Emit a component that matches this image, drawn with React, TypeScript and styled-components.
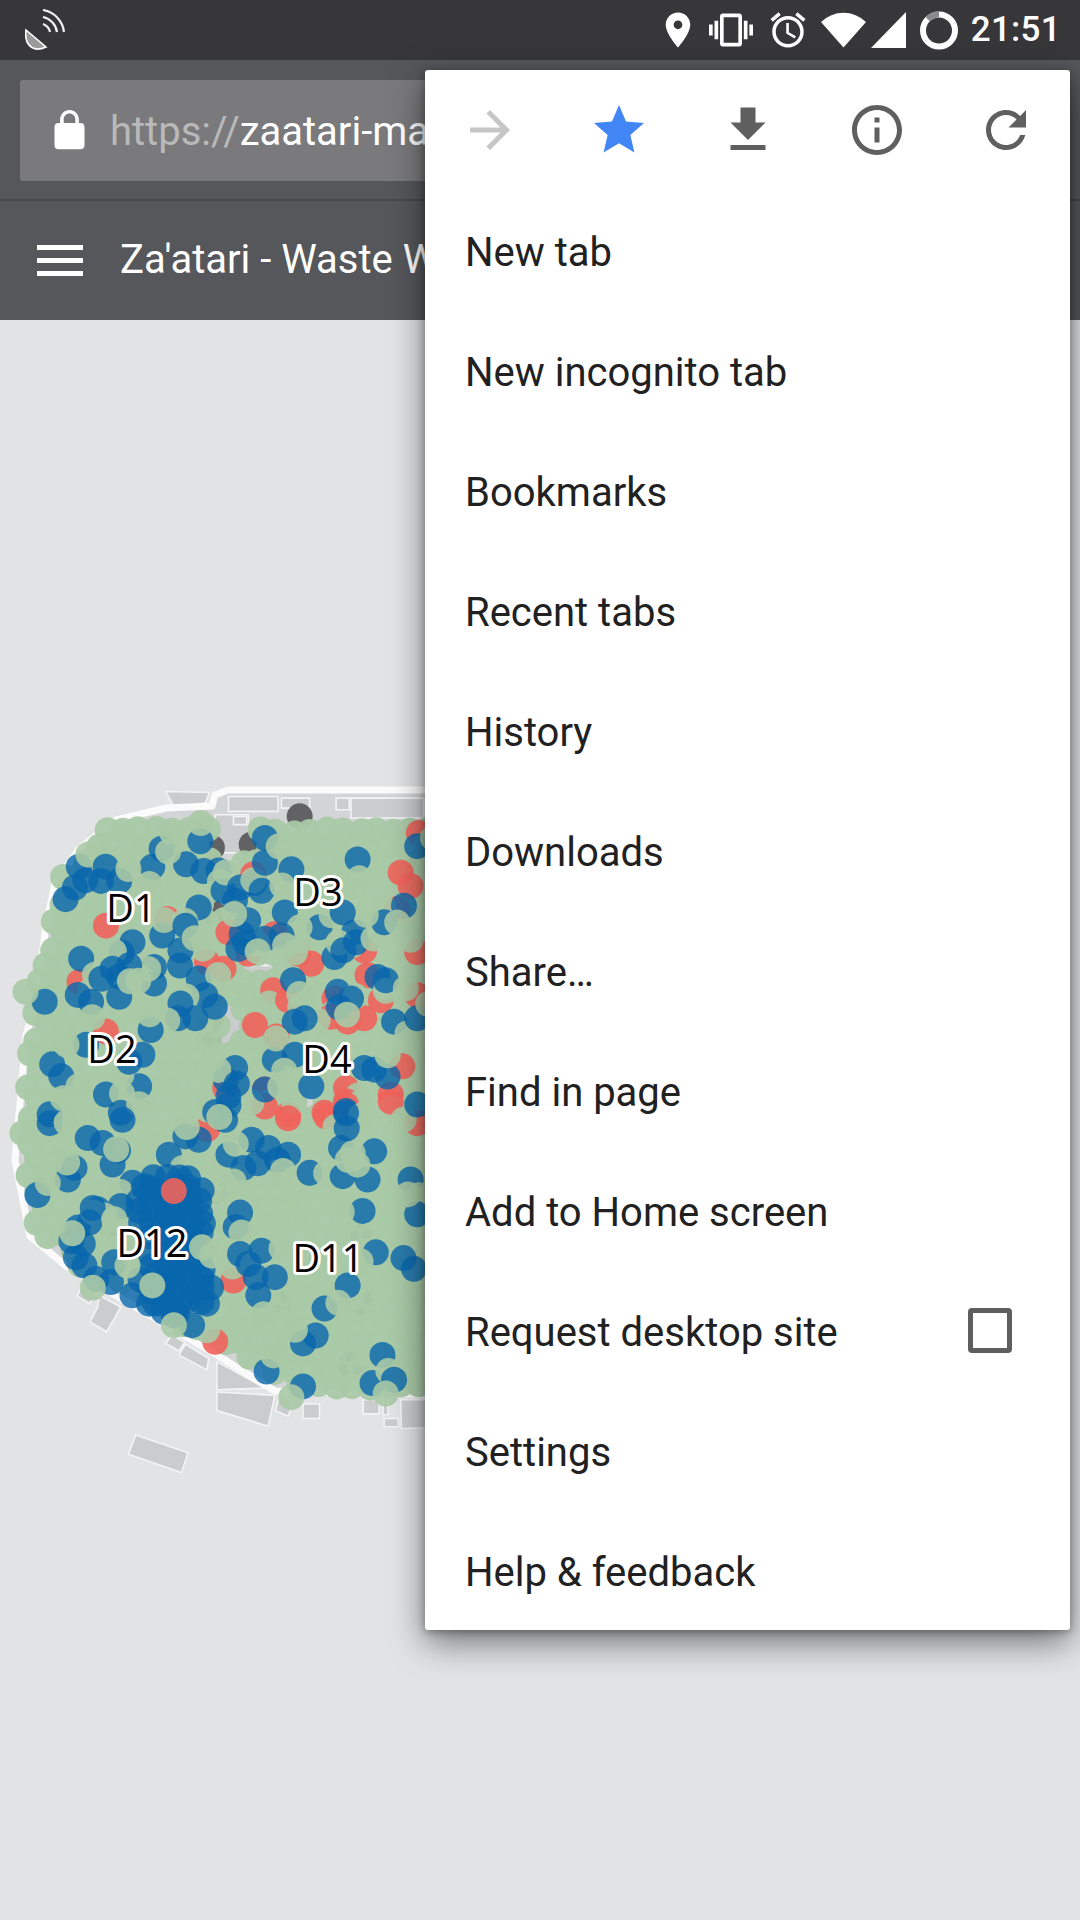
import React from 'react';
import styled, { createGlobalStyle } from 'styled-components';

const Global = createGlobalStyle`
  html, body { margin: 0; padding: 0; background: #e2e3e5; }
  #root { width: 1080px; height: 1920px; overflow: hidden; }
`;

/* ---------- map data ---------- */
type P = [number, number];
const K = 1 / 3.02;
const z3 = ([x, y]: P): P => [x * K, 770 + y * K];
const z4 = ([x, y]: P): P => [x * K, 1100 + y * K];
const pts = (ps: P[]) => ps.map(p => p.join(',')).join(' ');

let seed = 12345;
const rnd = () => {
  seed = (seed * 16807) % 2147483647;
  return seed / 2147483647;
};

const inPoly = (x: number, y: number, poly: P[]) => {
  let c = false;
  for (let i = 0, j = poly.length - 1; i < poly.length; j = i++) {
    const [xi, yi] = poly[i];
    const [xj, yj] = poly[j];
    if (yi > y !== yj > y && x < ((xj - xi) * (y - yi)) / (yj - yi) + xi) c = !c;
  }
  return c;
};

const campOutline: P[] = [
  [116, 820], [166, 808], [212, 806], [215, 795], [228, 790], [440, 790], [440, 1395],
  [275, 1391], [212, 1352], [132, 1305], [66, 1266], [30, 1236], [15, 1160], [26, 1035], [36, 1002], [46, 926], [55, 883], [79, 849],
];
const greenArea: P[] = [
  [112, 824], [208, 824], [212, 860], [248, 860], [256, 822], [440, 818], [440, 1386], [351, 1392], [285, 1388], [238, 1358],
  [215, 1342], [172, 1319], [109, 1282], [79, 1266], [31, 1225], [28, 1183], [16, 1133], [20, 1118], [26, 1068], [31, 1022],
  [41, 975], [52, 929], [62, 873], [86, 846],
];
const holes: [number, number, number, number][] = [
  [215, 900, 238, 917],
  [238, 966, 275, 980],
  [222, 1000, 238, 1052],
  [300, 1095, 318, 1112],
];
const inHole = (x: number, y: number) => holes.some(([a, b, c, d]) => x > a && x < c && y > b && y < d);

type Kind = 'green' | 'veil' | 'blue' | 'red' | 'grey';
type Dot = { x: number; y: number; kind: Kind };
const dots: Dot[] = [];

const greys: P[] = [
  ...([[905, 140], [640, 235], [760, 225], [640, 430], [640, 680], [635, 755], [1270, 265], [630, 820]] as P[]).map(z3),
  ...([[490, 235], [650, 275], [1085, 395], [845, 610], [1100, 615], [1060, 800], [525, 610], [330, 375]] as P[]).map(z4),
];
greys.forEach(([x, y]) => dots.push({ x, y, kind: 'grey' }));

for (let i = 0, y = 816; y < 1394; y += 15, i++) {
  for (let x = 12 + (i % 2 ? 8.5 : 0); x < 436; x += 17) {
    const gx = x + (rnd() - 0.5) * 5;
    const gy = y + (rnd() - 0.5) * 5;
    if (inPoly(gx, gy, greenArea) && !inHole(gx, gy)) dots.push({ x: gx, y: gy, kind: 'green' });
  }
}

const reds: P[] = [
  ...([[1210, 310], [765, 315], [690, 490], [830, 495], [900, 555], [1100, 545], [1110, 620], [625, 580], [675, 600], [240, 640], [505, 450], [320, 470],
    [825, 665], [870, 695], [1010, 690], [1150, 695], [770, 770], [835, 805], [1000, 745], [1050, 760], [1100, 750], [1240, 350], [1200, 420], [1260, 550],
    [1215, 895], [1045, 960], [1045, 1000], [1180, 980], [800, 965], [980, 1035], [870, 1040], [750, 555], [940, 585], [320, 790], [1265, 190], [1260, 680], [680, 960]] as P[]).map(z3),
  ...([[625, 88], [705, 545], [650, 730], [870, 55], [985, 50], [1045, 15], [800, 20], [1180, 5], [1260, 70]] as P[]).map(z4),
];
reds.forEach(([x, y]) => {
  dots.push({ x, y, kind: 'red' });
  if (rnd() < 0.55) {
    const a = rnd() * 6.28;
    dots.push({ x: x + Math.cos(a) * 14, y: y + Math.sin(a) * 14, kind: 'veil' });
  }
});

const blues3: P[] = [[488, 238], [460, 292], [605, 215], [238, 292], [305, 335], [360, 335], [198, 390], [562, 285], [615, 305], [675, 365], [725, 355], [800, 205],
  [800, 280], [790, 365], [600, 415], [400, 520], [490, 500], [560, 470], [545, 545], [465, 595], [465, 645], [360, 685], [245, 570], [390, 590], [340, 600], [275, 700],
  [135, 700], [600, 630], [620, 680], [545, 705], [590, 750], [455, 785], [185, 925], [420, 955], [320, 980], [365, 1035], [150, 1040], [430, 860], [260, 830], [1080, 270],
  [880, 300], [1010, 565], [965, 475], [1070, 490], [1075, 520], [1160, 460], [1220, 410], [1035, 430], [860, 430], [850, 500], [800, 510], [730, 495], [720, 540], [885, 635],
  [1140, 625], [1165, 635], [1020, 670], [1060, 690], [920, 750], [890, 760], [1190, 760], [1100, 900], [1130, 905], [830, 875], [890, 860], [710, 900], [690, 985], [800, 965],
  [940, 955], [1045, 1030], [1260, 230], [1260, 1010], [1260, 750], [740, 520]];
const blues4: P[] = [[150, 70], [265, 115], [310, 130], [225, 205], [205, 240], [340, 195], [113, 287], [400, 250], [510, 165], [560, 110], [600, 120], [690, 165], [760, 120],
  [810, 145], [870, 165], [735, 205], [935, 220], [1030, 145], [1035, 230], [1130, 155], [1110, 240], [1240, 240], [1095, 335], [725, 340], [295, 330], [365, 320], [235, 385],
  [270, 370], [250, 435], [255, 500], [345, 490], [335, 550], [725, 465], [790, 455], [750, 495], [830, 535], [780, 590], [1050, 560], [1135, 460], [980, 630], [915, 735],
  [1155, 770], [805, 820], [915, 865], [1125, 855], [1190, 845], [1260, 345], [1250, 510], [680, 60], [690, 15], [1045, 40], [370, 60]];
[...blues3.map(z3), ...blues4.map(z4)].forEach(([x, y]) => {
  dots.push({ x, y, kind: 'blue' });
  if (rnd() < 0.25) {
    const a = rnd() * 6.28;
    dots.push({ x: x + Math.cos(a) * 15, y: y + Math.sin(a) * 15, kind: 'blue' });
  }
  if (rnd() < 0.75) {
    const a = rnd() * 6.28;
    const d = 15 + rnd() * 7;
    dots.push({ x: x + Math.cos(a) * d, y: y + Math.sin(a) * d, kind: 'veil' });
  }
});
/* dense blue cluster at D12: two overlapping blobs */
const blobs: [number, number, number][] = [[525, 335], [530, 540]].map(([x, y], i) => [x, y, i ? 115 : 120]);
for (let y = 235; y < 670; y += 34) {
  for (let x = 390; x < 670; x += 36) {
    const px = x + (rnd() - 0.5) * 18;
    const py = y + (rnd() - 0.5) * 18;
    if (blobs.some(([cx, cy, r]) => Math.hypot(px - cx, py - cy) < r)) {
      const [fx, fy] = z4([px, py]);
      dots.push({ x: fx, y: fy, kind: 'blue' });
    }
  }
}
([[400, 590], [450, 615], [495, 640], [525, 650], [580, 680], [625, 615]] as P[]).map(z4).forEach(([x, y]) => dots.push({ x, y, kind: 'blue' }));
([[525, 275]] as P[]).map(z4).forEach(([x, y]) => dots.push({ x, y, kind: 'red' }));
([[610, 445], [640, 470], [385, 500], [460, 560], [525, 680], [345, 360]] as P[]).map(z4).forEach(([x, y]) => dots.push({ x, y, kind: 'veil' }));

const buildings: P[][] = [
  ...([
    [[250, 557], [292, 580], [270, 615], [233, 592]],
    [[300, 590], [365, 625], [322, 700], [272, 670], [295, 625]],
    [[520, 710], [558, 732], [540, 757], [500, 735]],
    [[560, 738], [630, 780], [625, 815], [540, 770]],
    [[655, 790], [800, 870], [655, 875]],
    [[655, 882], [830, 892], [810, 985], [655, 938]],
    [[845, 890], [885, 912], [870, 955], [832, 938]],
    [[915, 918], [965, 918], [965, 962], [915, 962]],
    [[1097, 905], [1145, 905], [1145, 948], [1097, 948]],
    [[1157, 903], [1172, 903], [1172, 950], [1157, 950]],
    [[1160, 962], [1203, 962], [1203, 987], [1160, 987]],
    [[1210, 905], [1290, 905], [1290, 990], [1212, 992]],
    [[410, 1012], [568, 1065], [548, 1125], [388, 1070]],
  ] as P[][]).map(b => b.map(z4)),
  ([[500, 65], [632, 68], [620, 100], [545, 110], [525, 110]] as P[]).map(z3),
];
const innerLots: P[][] = ([
  [[650, 135], [750, 135], [750, 250], [650, 250]],
  [[690, 80], [840, 80], [840, 125], [690, 125]],
  [[705, 140], [745, 140], [745, 165], [705, 165]],
  [[850, 85], [935, 85], [935, 115], [850, 115]],
  [[1015, 85], [1055, 85], [1055, 120], [1015, 120]],
  [[1060, 85], [1280, 85], [1280, 145], [1060, 145]],
  [[725, 395], [800, 395], [800, 450], [725, 450]],
  [[660, 680], [735, 680], [735, 870], [660, 870]],
  [[700, 590], [840, 590], [840, 640], [700, 640]],
] as P[][]).map(b => b.map(z3));

const fills: Record<Kind, string> = { green: '#a9c9a6', veil: '#a9c9a6', blue: '#0866ad', red: '#f0635b', grey: '#626264' };
const alphas: Record<Kind, number> = { green: 0.95, veil: 0.9, blue: 0.8, red: 0.9, grey: 1 };

const labels: { t: string; x: number; y: number }[] = [
  { t: 'D1', x: 131, y: 922 },
  { t: 'D2', x: 112, y: 1063 },
  { t: 'D3', x: 318, y: 906 },
  { t: 'D4', x: 327, y: 1073 },
  { t: 'D12', x: 152, y: 1257 },
  { t: 'D11', x: 328, y: 1272 },
];

/* ---------- page ---------- */
const Page = styled.div`
  position: relative;
  width: 1080px;
  height: 1920px;
  display: flex;
  flex-direction: column;
  background: #e2e3e5;
  font-family: Roboto, "Liberation Sans", sans-serif;
  overflow: hidden;
`;
const StatusBar = styled.div`
  height: 60px;
  flex: none;
  background: #37373a;
  display: flex;
  align-items: center;
  justify-content: space-between;
  padding: 0 19px 0 25px;
  color: #fff;
`;
const StatusGroup = styled.div`
  display: flex;
  align-items: center;
`;
const StatusIcon = styled.svg<{ $gap?: number }>`
  display: block;
  flex: none;
  fill: #fff;
  margin-left: ${p => p.$gap ?? 0}px;
`;
const Clock = styled.span`
  margin-left: 13px;
  font-size: 35px;
  font-weight: 500;
  letter-spacing: 0.3px;
  line-height: 60px;
`;
const Toolbar = styled.div`
  height: 141px;
  flex: none;
  box-sizing: border-box;
  background: #56575a;
  padding: 20px 0 0 20px;
  border-bottom: 2px solid #47484a;
`;
const UrlBox = styled.div`
  width: 600px;
  height: 101px;
  background: #7a7a7c;
  border-radius: 3px;
  display: flex;
  align-items: center;
  padding-left: 27px;
  box-sizing: border-box;
`;
const LockIcon = styled.svg`
  display: block;
  flex: none;
  fill: #fff;
`;
const UrlText = styled.span`
  margin: 2px 0 0 18px;
  font-size: 40px;
  color: #fff;
  white-space: nowrap;
`;
const UrlScheme = styled.span`
  color: #b9b9ba;
`;
const AppBar = styled.div`
  height: 119px;
  flex: none;
  background: #56575a;
  display: flex;
  align-items: center;
  padding-left: 37px;
`;
const Burger = styled.div`
  width: 46px;
  height: 31px;
  flex: none;
  display: flex;
  flex-direction: column;
  justify-content: space-between;
`;
const BurgerBar = styled.div`
  height: 5px;
  background: #fff;
`;
const Title = styled.span`
  margin: -2px 0 0 37px;
  font-size: 40px;
  color: #fff;
  white-space: nowrap;
`;
const MapArea = styled.svg`
  display: block;
  flex: 1;
  width: 1080px;
`;
const Lot = styled.polygon`
  fill: #cbccce;
  stroke: #f4f4f5;
  stroke-width: 1.6;
`;
const Camp = styled.polygon`
  fill: #d3d4d6;
  stroke: #fbfbfb;
  stroke-width: 7;
  stroke-linejoin: round;
`;
const MapDot = styled.circle<{ $kind: Kind }>`
  fill: ${p => fills[p.$kind]};
  fill-opacity: ${p => alphas[p.$kind]};
`;
const MapLabel = styled.text`
  font-family: "Open Sans", "DejaVu Sans", sans-serif;
  font-size: 38px;
  font-weight: 500;
  text-anchor: middle;
  fill: #000;
  stroke: #fff;
  stroke-width: 6px;
  stroke-linejoin: round;
  paint-order: stroke;
`;
const Menu = styled.div`
  position: absolute;
  left: 425px;
  top: 70px;
  width: 645px;
  background: #fff;
  border-radius: 3px;
  box-shadow: 0 12px 34px rgba(0, 0, 0, 0.5), 0 2px 8px rgba(0, 0, 0, 0.3);
  display: flex;
  flex-direction: column;
`;
const IconRow = styled.div`
  height: 120px;
  box-sizing: border-box;
  display: grid;
  grid-template-columns: repeat(5, 1fr);
  align-items: center;
  justify-items: center;
`;
const MenuIcon = styled.svg<{ $color: string }>`
  display: block;
  fill: ${p => p.$color};
`;
const MenuRow = styled.div`
  height: 120px;
  box-sizing: border-box;
  display: flex;
  align-items: center;
  justify-content: space-between;
  padding: 4px 58px 0 40px;
  font-size: 40px;
  color: #212121;
`;
const Checkbox = styled.div`
  width: 44px;
  height: 45px;
  margin-top: -4px;
  box-sizing: border-box;
  border: 5px solid #5f5f5f;
  border-radius: 4px;
`;

const menuItems = ['New tab', 'New incognito tab', 'Bookmarks', 'Recent tabs', 'History', 'Downloads', 'Share…', 'Find in page', 'Add to Home screen', 'Request desktop site', 'Settings', 'Help & feedback'];
const topIcons: { d: string; c: string }[] = [
  { d: 'M12 4l-1.41 1.41L16.17 11H4v2h12.17l-5.58 5.59L12 20l8-8z', c: '#c6c6c6' },
  { d: 'M12 17.27L18.18 21l-1.64-7.03L22 9.24l-7.19-.61L12 2 9.19 8.63 2 9.24l5.46 4.73L5.82 21z', c: '#4285f4' },
  { d: 'M19 9h-4V3H9v6H5l7 7 7-7zM5 18v2h14v-2H5z', c: '#5f5f5f' },
  { d: 'M11 7h2v2h-2zm0 4h2v6h-2zm1-9C6.48 2 2 6.48 2 12s4.48 10 10 10 10-4.48 10-10S17.52 2 12 2zm0 18c-4.41 0-8-3.59-8-8s3.59-8 8-8 8 3.59 8 8-3.59 8-8 8z', c: '#5f5f5f' },
  { d: 'M17.65 6.35C16.2 4.9 14.21 4 12 4c-4.42 0-7.99 3.58-7.99 8s3.57 8 7.99 8c3.73 0 6.84-2.55 7.73-6h-2.08c-.82 2.33-3.04 4-5.65 4-3.31 0-6-2.69-6-6s2.69-6 6-6c1.66 0 3.14.69 4.22 1.78L13 11h7V4l-2.35 2.35z', c: '#5f5f5f' },
];

export default function App() {
  return (
    <Page>
      <Global />
      <StatusBar>
        <StatusIcon width="41" height="42" viewBox="0 0 41 42">
          <path d="M1 21 L21 38 Q8 44 2 33 Q0 27 1 21 Z" fill="#9a9a9a" stroke="#fff" strokeWidth="1.6" />
          <path d="M18 1 A25.3 25.3 0 0 1 39 23 M18 8 A18 18 0 0 1 32 23 M18 15 A11 11 0 0 1 25 23" fill="none" stroke="#f2f2f2" strokeWidth="2.2" />
        </StatusIcon>
        <StatusGroup>
          <StatusIcon width="42" height="42" viewBox="0 0 24 24">
            <path d="M12 2C8.13 2 5 5.13 5 9c0 5.25 7 13 7 13s7-7.75 7-13c0-3.87-3.13-7-7-7zm0 9.5c-1.38 0-2.5-1.12-2.5-2.5s1.12-2.5 2.5-2.5 2.5 1.12 2.5 2.5-1.12 2.5-2.5 2.5z" />
          </StatusIcon>
          <StatusIcon $gap={10} width="44" height="44" viewBox="0 0 24 24">
            <path d="M0 15h2V9H0v6zm3 2h2V7H3v10zm19-8v6h2V9h-2zm-3 8h2V7h-2v10zM16.5 3h-9C6.67 3 6 3.67 6 4.5v15c0 .83.67 1.5 1.5 1.5h9c.83 0 1.5-.67 1.5-1.5v-15c0-.83-.67-1.5-1.5-1.5zM16 19H8V5h8v14z" />
          </StatusIcon>
          <StatusIcon $gap={14} width="42" height="42" viewBox="0 0 24 24">
            <path d="M22 5.72l-4.6-3.86-1.29 1.53 4.6 3.86L22 5.72zM7.88 3.39L6.6 1.86 2 5.71l1.29 1.53 4.59-3.85zM12.5 8H11v6l4.75 2.85.75-1.23-4-2.37V8zM12 4c-4.97 0-9 4.03-9 9s4.03 9 9 9c4.97 0 9-4.03 9-9s-4.03-9-9-9zm0 16c-3.87 0-7-3.13-7-7s3.13-7 7-7 7 3.13 7 7-3.13 7-7 7z" />
          </StatusIcon>
          <StatusIcon $gap={12} width="45" height="36" viewBox="0 0 45 36">
            <path d="M22.5 35.5 L0 10 A32 32 0 0 1 45 10 Z" />
          </StatusIcon>
          <StatusIcon $gap={5} width="35" height="36" viewBox="0 0 35 36">
            <path d="M0 36 L35 0 V36 Z" />
          </StatusIcon>
          <StatusIcon $gap={14} width="38" height="39" viewBox="0 0 38 38">
            <circle cx="19" cy="19" r="16" fill="none" stroke="#fff" strokeWidth="6" />
            <path d="M19 3 A16 16 0 0 0 7.7 7.7" fill="none" stroke="#8a8a8c" strokeWidth="6" />
          </StatusIcon>
          <Clock>21:51</Clock>
        </StatusGroup>
      </StatusBar>
      <Toolbar>
        <UrlBox>
          <LockIcon width="45" height="45" viewBox="0 0 24 24">
            <path fillRule="evenodd" d="M18 8h-1V6c0-2.76-2.24-5-5-5S7 3.24 7 6v2H6c-1.1 0-2 .9-2 2v10c0 1.1.9 2 2 2h12c1.1 0 2-.9 2-2V10c0-1.1-.9-2-2-2zM15.1 8H8.9V6c0-1.71 1.39-3.1 3.1-3.1s3.1 1.39 3.1 3.1v2z" />
          </LockIcon>
          <UrlText><UrlScheme>https://</UrlScheme>zaatari-ma</UrlText>
        </UrlBox>
      </Toolbar>
      <AppBar>
        <Burger>
          <BurgerBar />
          <BurgerBar />
          <BurgerBar />
        </Burger>
        <Title>Za'atari - Waste W</Title>
      </AppBar>
      <MapArea viewBox="0 320 1080 1600" height="1600">
        {buildings.map((b, i) => <Lot key={i} points={pts(b)} />)}
        <Camp points={pts(campOutline)} />
        {innerLots.map((b, i) => <Lot key={i} points={pts(b)} />)}
        {dots.map((d, i) => <MapDot key={i} cx={d.x} cy={d.y} r={13} $kind={d.kind} />)}
        {labels.map(l => <MapLabel key={l.t} x={l.x} y={l.y}>{l.t}</MapLabel>)}
      </MapArea>
      <Menu>
        <IconRow>
          {topIcons.map((ic, i) => (
            <MenuIcon key={i} $color={ic.c} width="60" height="60" viewBox="0 0 24 24"><path d={ic.d} /></MenuIcon>
          ))}
        </IconRow>
        {menuItems.map(t => (
          <MenuRow key={t}>
            {t}
            {t === 'Request desktop site' && <Checkbox />}
          </MenuRow>
        ))}
      </Menu>
    </Page>
  );
}
